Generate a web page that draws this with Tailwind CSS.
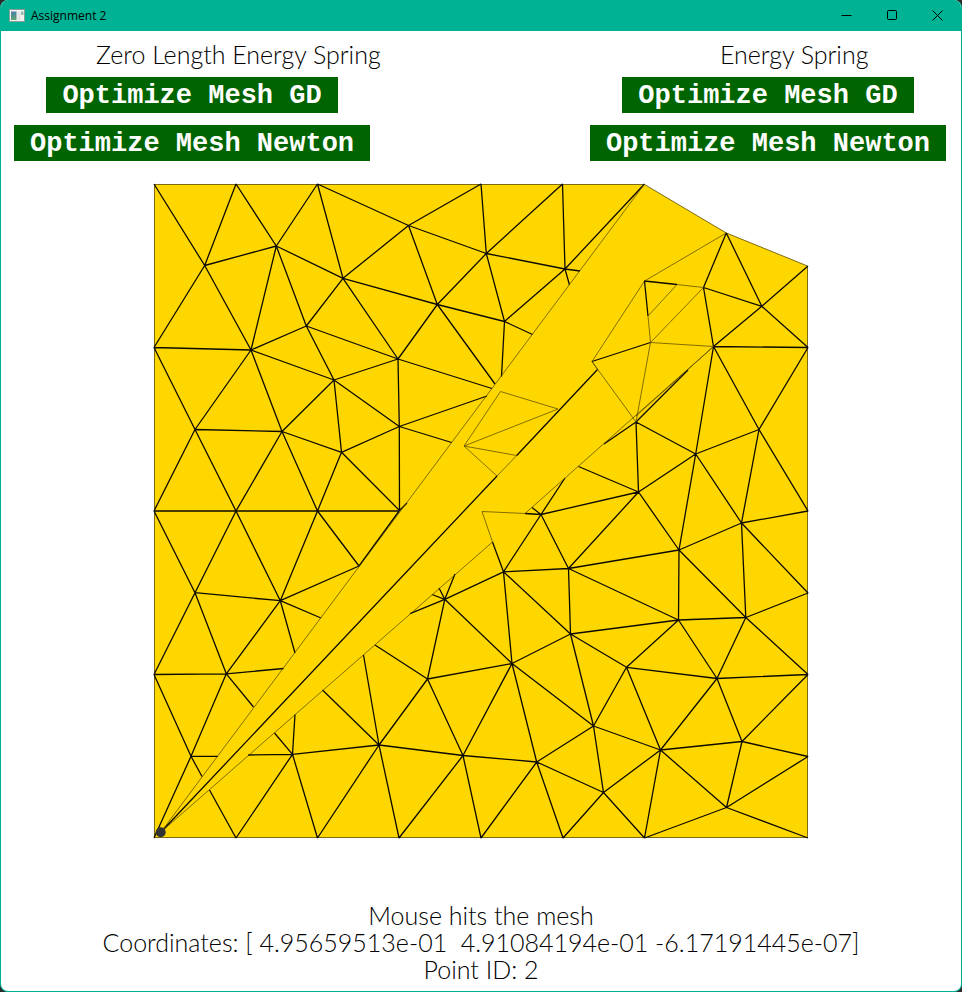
<!DOCTYPE html>
<html lang="en">
<head>
<meta charset="utf-8">
<title>Assignment 2</title>
<script src="https://cdn.jsdelivr.net/npm/@tailwindcss/browser@4"></script>
</head>
<body class="bg-[#2b2b2b]">
<div class="flex min-h-screen flex-col overflow-hidden rounded-lg border border-t-0 border-[#00b294] bg-white text-[#1a1a1a]">
  <header class="flex h-[31px] shrink-0 items-center bg-[#00b294] pl-2 text-black">
    <svg class="mr-1.5 h-4 w-4" viewBox="0 0 16 16" aria-hidden="true">
      <defs><linearGradient id="pane" x1="0" y1="0" x2="0" y2="1"><stop offset="0" stop-color="#4a7dab"/><stop offset="1" stop-color="#5fa56f"/></linearGradient></defs>
      <rect x="0.5" y="1.5" width="15" height="12" fill="#f3f3f3" stroke="#8c9a98"/>
      <rect x="2" y="3.500" width="5.500" height="8.500" fill="url(#pane)"/>
      <rect x="8.500" y="3.500" width="3" height="8.500" fill="#e4e4e4"/>
      <rect x="12" y="3.500" width="2.500" height="3.500" fill="#8fbfa8"/>
    </svg>
    <h1 class="grow font-['Open_Sans',sans-serif] text-[12px]">Assignment 2</h1>
    <button class="flex h-full w-[45px] items-center justify-center" aria-label="Minimize"><svg class="h-[11px] w-[11px]" viewBox="0 0 11 11"><path d="M.5 5.500h10" stroke="#000"/></svg></button>
    <button class="flex h-full w-[45px] items-center justify-center" aria-label="Maximize"><svg class="h-[11px] w-[11px]" viewBox="0 0 11 11"><rect x="1.500" y=".5" width="9" height="9" rx="1" fill="none" stroke="#000"/></svg></button>
    <button class="flex h-full w-[47px] items-center justify-center" aria-label="Close"><svg class="h-[11px] w-[11px]" viewBox="0 0 11 11"><path d="M.5 .5l10 10M10.500 .5l-10 10" stroke="#000"/></svg></button>
  </header>

  <main class="flex grow flex-col font-['Lato',sans-serif] text-[25px] font-light leading-[27px] text-black">
    <div class="flex justify-between px-[13px] pt-2.5">
      <section>
        <h2 class="pl-[82px] whitespace-nowrap">Zero Length Energy Spring</h2>
        <div class="mt-[9px] flex w-fit flex-col items-center gap-3 font-['Liberation_Mono',monospace] text-[27px] font-bold leading-[34px] text-white">
          <button class="bg-[#006400] px-4 pt-0.5">Optimize Mesh GD</button>
          <button class="bg-[#006400] px-4 pt-0.5">Optimize Mesh Newton</button>
        </div>
      </section>
      <section class="mr-[2px]">
        <h2 class="pl-[130px] whitespace-nowrap">Energy Spring</h2>
        <div class="mt-[9px] flex w-fit flex-col items-center gap-3 font-['Liberation_Mono',monospace] text-[27px] font-bold leading-[34px] text-white">
          <button class="bg-[#006400] px-4 pt-0.5">Optimize Mesh GD</button>
          <button class="bg-[#006400] px-4 pt-0.5">Optimize Mesh Newton</button>
        </div>
      </section>
    </div>

    <svg class="mx-auto mt-[19px] w-[662px] max-w-full" viewBox="150 180 662 662" role="img" aria-label="Triangle mesh">
      <path fill="#ffd700" stroke="#7d6b10" stroke-width="1" d="M154.500 184.500H644.500L726.300 233L807.500 266V837.500H154.500Z"/>
      <g fill="none" stroke="#0c0a00" stroke-width="1.300" stroke-linejoin="bevel">
        <path d="M154 184L204.700 265.500L236 184L276.300 246L317.500 184L343 278.300L408.500 225.500L317.500 184M408.500 225.500L481 184L486.300 253.500L562.500 184L565 269L644.500 184M204.700 265.500L276.300 246L343 278.300L306.300 326L276.300 246L251 350L204.700 265.500L154 347.500L251 350L306.300 326L334 380L251 350L195 429.500L154 347.500"/>
        <path d="M408.500 225.500L486.300 253.500L565 269L504.500 321.500L486.300 253.500L437.300 304.500L408.500 225.500M343 278.300L437.300 304.500L504.500 321.500M343 278.300L398 359L306.300 326M437.300 304.500L398 359L334 380M565 269L580 271M565 269L569.500 285M504.500 321.500L532.500 334.500M504.500 321.500L501.500 376.500M437.300 304.500L495 384M398 359L492 388.500M398 359L399.300 426.500L334 380M399.300 426.500L487 396M399.300 426.500L451.700 442.500"/>
        <path d="M251 350L282 431.500L334 380L341.500 452.300L399.300 426.500L399.500 510.500L341.500 452.300L282 431.500L195 429.500L154 511H399.500M195 429.500L236 511L282 431.500L317.500 511L341.500 452.300M399.500 510.500L407 503M399.500 510.500L359 566L317.500 511L280.300 600.700L236 511L195 592.700L154 511M359 566L280.300 600.700L195 592.700L154 674.500L226.300 673.800L195 592.700M280.300 600.700L321 618M280.300 600.700L295 653M280.300 600.700L226.300 673.800L283.500 668.500M226.300 673.800L253.500 707M226.300 673.800L191 756.300L154 674.500M154 838L191 756.300H218M191 756.300L202 776.500"/>
        <path d="M248 755L292.500 754.300L236 838L209.500 790M292.500 754.300L274.500 733M292.500 754.300L295 714.500M292.500 754.300L317.500 838L379 745L292.500 754.300M379 745L322.500 690M379 745L363.500 655M379 745L399 838L463 755.500L379 745L427.500 679L375 645M427.500 679L444.800 599.300L512 663.500L427.500 679L463 755.500L512 663.500L536.700 762L463 755.500L481 838L536.700 762L563 838L603.500 792.500L536.700 762L593.500 726L512 663.500L570.500 634L593.500 726L603.500 792.500L644.500 838L660.500 750L603.500 792.500"/>
        <path d="M455 574L444.800 599.300L439 588M432 594.500L444.800 599.300M444.800 599.300L410 613.700M444.800 599.300L503.500 571.800L512 663.500M492.500 542L503.500 571.800L570.500 634L568.500 568.500L503.500 571.800L541 514.500L568.500 568.500L638.500 492L541 514.500L525 513.500M532 507.500L541 514.500L565 478M578.500 466.500L638.500 492L636 422L695.700 454L638.500 492L679 550L568.500 568.500L678.500 620L570.500 634L626.500 667.300L593.500 726L660.500 750L626.500 667.300L678.500 620L679 550L695.700 454L741.500 523L679 550L745.800 617.500L678.500 620L717 678.500L626.500 667.300"/>
        <path d="M660.500 750L717 678.500L742 741.500L660.500 750L726.500 807.500L742 741.500L808 756.500L726.500 807.500L808 838M726.500 807.500L644.500 838M742 741.500L808 674.500L717 678.500L745.800 617.500L808 674.500M745.800 617.500L808 593L741.500 523L745.800 617.500M741.500 523L808 511L759 429.500L741.500 523M759 429.500L695.700 454L713.500 346.500L759 429.500L808 347.500L713.500 346.500L761.800 306.300L808 347.500M761.800 306.300L808 266M761.800 306.300L726.300 233L703.500 287.500L761.800 306.300M703.500 287.500L713.500 346.500M688 370L636 422L604 444M592 361.500L650.500 342.500M648 316L644.500 281L677 284.500"/>
        <path d="M597.500 369.500L516.700 455.500M497 476L161 832"/>
      </g>
      <g fill="none" stroke="#4d4100" stroke-width=".7">
        <path d="M644.500 184L161 832M516.700 455.500L497 476M713.500 346.500L525 513.500L482 511.500L492.500 542L161 832M500.500 391.500L558 409L464 446ZM464 446L516.700 455.500M464 446L497 476M726.300 233L644.500 281L592 361.500L636 422L650.500 342.500L713.500 346.500M592 361.500L597.500 369.500M677 284.500L703.500 287.500L650.500 342.500L648 316L677 284.500M713.500 346.500L636 416"/>
      </g>
      <circle cx="160.700" cy="832.300" r="5" fill="#333"/>
    </svg>

    <footer class="mt-auto pb-2 text-center">
      <p>Mouse hits the mesh</p>
      <p class="whitespace-pre">Coordinates: [ 4.95659513e-01  4.91084194e-01 -6.17191445e-07]</p>
      <p>Point ID: 2</p>
    </footer>
  </main>
</div>
</body>
</html>
